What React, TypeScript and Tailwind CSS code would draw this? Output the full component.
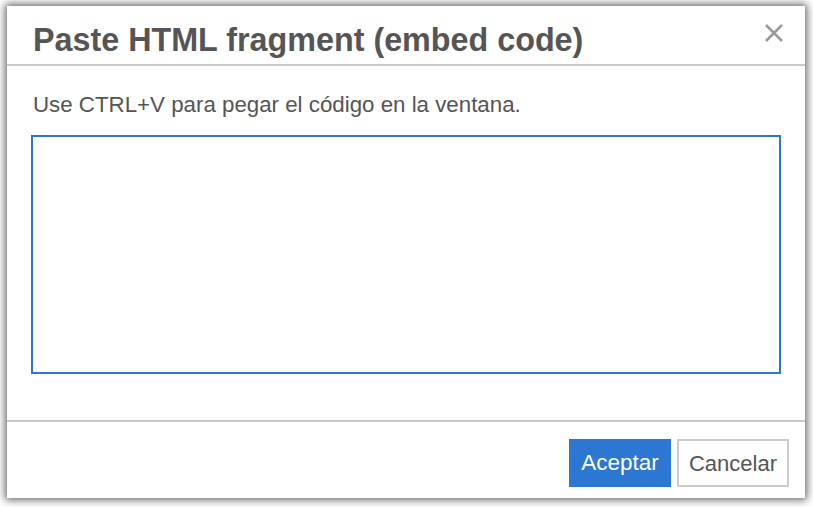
import React from "react";

export default function App() {
  return (
    <div className="w-[813px] h-[507px] bg-white pl-[7px] pt-[6px]" style={{ fontFamily: '"Liberation Sans", Arial, sans-serif' }}>
      <div className="w-[798px] h-[492px] bg-white flex flex-col shadow-[0_0_8px_2px_rgba(0,0,0,0.6)]">
        <div className="h-[60px] shrink-0 border-b-2 border-[#c9c9c9] flex items-start justify-between pl-[26px] pr-[22px] pt-[16px]">
          <div className="text-[32.3px] leading-[36px] font-bold text-[#555555]">Paste HTML fragment (embed code)</div>
          <svg width="18" height="18" viewBox="0 0 18 18" className="mt-[2px]">
            <path d="M1 1 L17 17 M17 1 L1 17" stroke="#9a9a9a" strokeWidth="2.6" strokeLinecap="butt" />
          </svg>
        </div>
        <div className="flex-1 flex flex-col pl-[24px] pr-[24px] pt-[26px]">
          <div className="text-[22.3px] leading-[26px] text-[#555555] pl-[2px]">Use CTRL+V para pegar el código en la ventana.</div>
          <textarea className="mt-[17px] w-[750px] h-[239px] border-2 border-[#2b77d1] outline-none resize-none" />
        </div>
        <div className="h-[78px] shrink-0 border-t-2 border-[#c9c9c9] flex items-start justify-end gap-[6px] pr-[16px] pt-[17px]">
          <button className="w-[102px] h-[48px] bg-[#2b77d1] text-white text-[22.5px]">Aceptar</button>
          <button className="w-[112px] h-[48px] bg-white border-2 border-[#cccccc] text-[#555555] text-[22px]">Cancelar</button>
        </div>
      </div>
    </div>
  );
}
